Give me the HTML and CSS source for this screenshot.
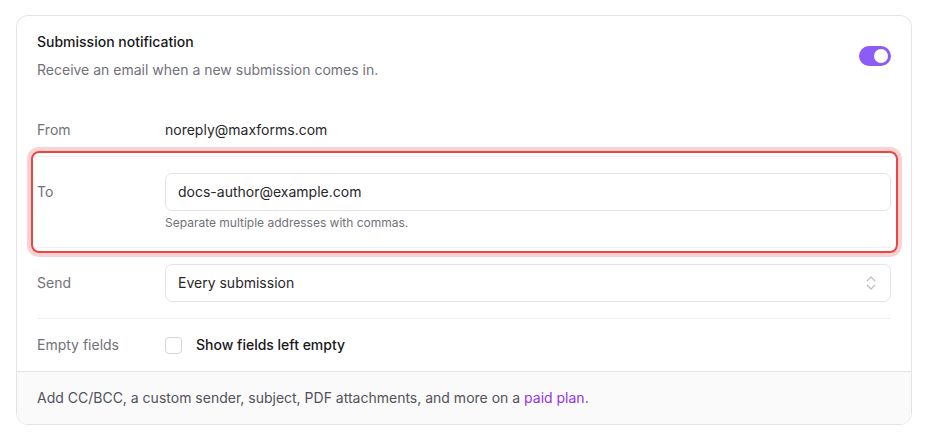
FILE: index.html
```html
<!DOCTYPE html>
<html lang="en">
<head>
<meta charset="utf-8">
<title>Submission notification</title>
<link rel="stylesheet" href="styles.css">
</head>
<body>
<div class="card">
  <div class="card-body">
    <div class="header">
      <div class="header-text">
        <div class="title">Submission notification</div>
        <div class="desc">Receive an email when a new submission comes in.</div>
      </div>
      <span class="toggle" role="switch" aria-checked="true"><span class="knob"></span></span>
    </div>
    <div class="rows">
      <div class="row">
        <div class="label">From</div>
        <div class="value">noreply@maxforms.com</div>
      </div>
      <div class="row row-input highlighted">
        <div class="label">To</div>
        <div class="field">
          <div class="input">docs-author@example.com</div>
          <div class="help">Separate multiple addresses with commas.</div>
        </div>
      </div>
      <div class="row row-input">
        <div class="label">Send</div>
        <div class="field">
          <div class="input select">
            <span>Every submission</span>
            <svg class="chevrons" width="18" height="18" viewBox="0 0 24 24" fill="none" stroke="currentColor" stroke-width="1.6" stroke-linecap="round" stroke-linejoin="round"><path d="m7 15 5 5 5-5"/><path d="m7 9 5-5 5 5"/></svg>
          </div>
        </div>
      </div>
      <div class="row">
        <div class="label">Empty fields</div>
        <label class="check">
          <span class="box"></span>
          <span class="check-text">Show fields left empty</span>
        </label>
      </div>
    </div>
  </div>
  <div class="footer">
    Add CC/BCC, a custom sender, subject, PDF attachments, and more on a <a class="link" href="#">paid plan</a>.
  </div>
</div>
</body>
</html>
```
FILE: styles.css
```css
* { box-sizing: border-box; }
html, body { background: #ffffff; }
body {
  margin: 15px 18px 0 16px;
  font-family: Inter, "Noto Sans", "Liberation Sans", sans-serif;
  font-size: 14px;
  line-height: 20px;
  color: #27272a;
}
.card {
  border: 1px solid #e4e4e7;
  border-radius: 12px;
  background: #fff;
}
.card-body {
  padding: 16px 20px 0;
}
.header {
  display: flex;
  align-items: center;
  justify-content: space-between;
}
.title {
  font-weight: 500;
  color: #18181b;
}
.desc {
  margin-top: 8px;
  color: #71717a;
}
.toggle {
  width: 32px;
  height: 20px;
  border-radius: 10px;
  background: #8b5cf6;
  display: flex;
  align-items: center;
  justify-content: flex-end;
  padding: 0 3px;
}
.knob {
  width: 14px;
  height: 14px;
  border-radius: 50%;
  background: #fff;
}
.rows {
  margin-top: 24px;
}
.row {
  display: grid;
  grid-template-columns: 128px 1fr;
  align-items: start;
  padding: 16px 0;
}
.row + .row {
  border-top: 1px solid #efeff1;
}
.label {
  color: #71717a;
}
.row-input .label {
  line-height: 38px;
}
.value {
  color: #27272a;
}
.highlighted {
  position: relative;
}
.highlighted::after {
  content: "";
  position: absolute;
  top: -6px;
  bottom: -6px;
  left: -6px;
  right: -7px;
  border: 2.5px solid #ef4444;
  border-radius: 8px;
  box-shadow: 0 0 0 4px rgba(239, 68, 68, 0.24);
  pointer-events: none;
}
.input {
  height: 38px;
  border: 1px solid #e4e4e7;
  border-radius: 7px;
  padding: 0 12px;
  display: flex;
  align-items: center;
  color: #27272a;
  background: #fff;
}
.select {
  justify-content: space-between;
  padding-right: 10px;
}
.chevrons {
  color: #bdbdc4;
}
.help {
  margin-top: 4px;
  font-size: 12px;
  line-height: 16px;
  color: #71717a;
}
.check {
  display: flex;
  align-items: center;
  gap: 14px;
}
.box {
  width: 17px;
  height: 17px;
  border: 1px solid #d4d4d8;
  border-radius: 4px;
  background: #fff;
}
.check-text {
  font-weight: 500;
  color: #18181b;
}
.footer {
  border-top: 1px solid #e4e4e7;
  background: #fafafa;
  padding: 16px 20px;
  color: #52525b;
  border-radius: 0 0 11px 11px;
}
.link {
  color: #9333ea;
  text-decoration: none;
}
```
